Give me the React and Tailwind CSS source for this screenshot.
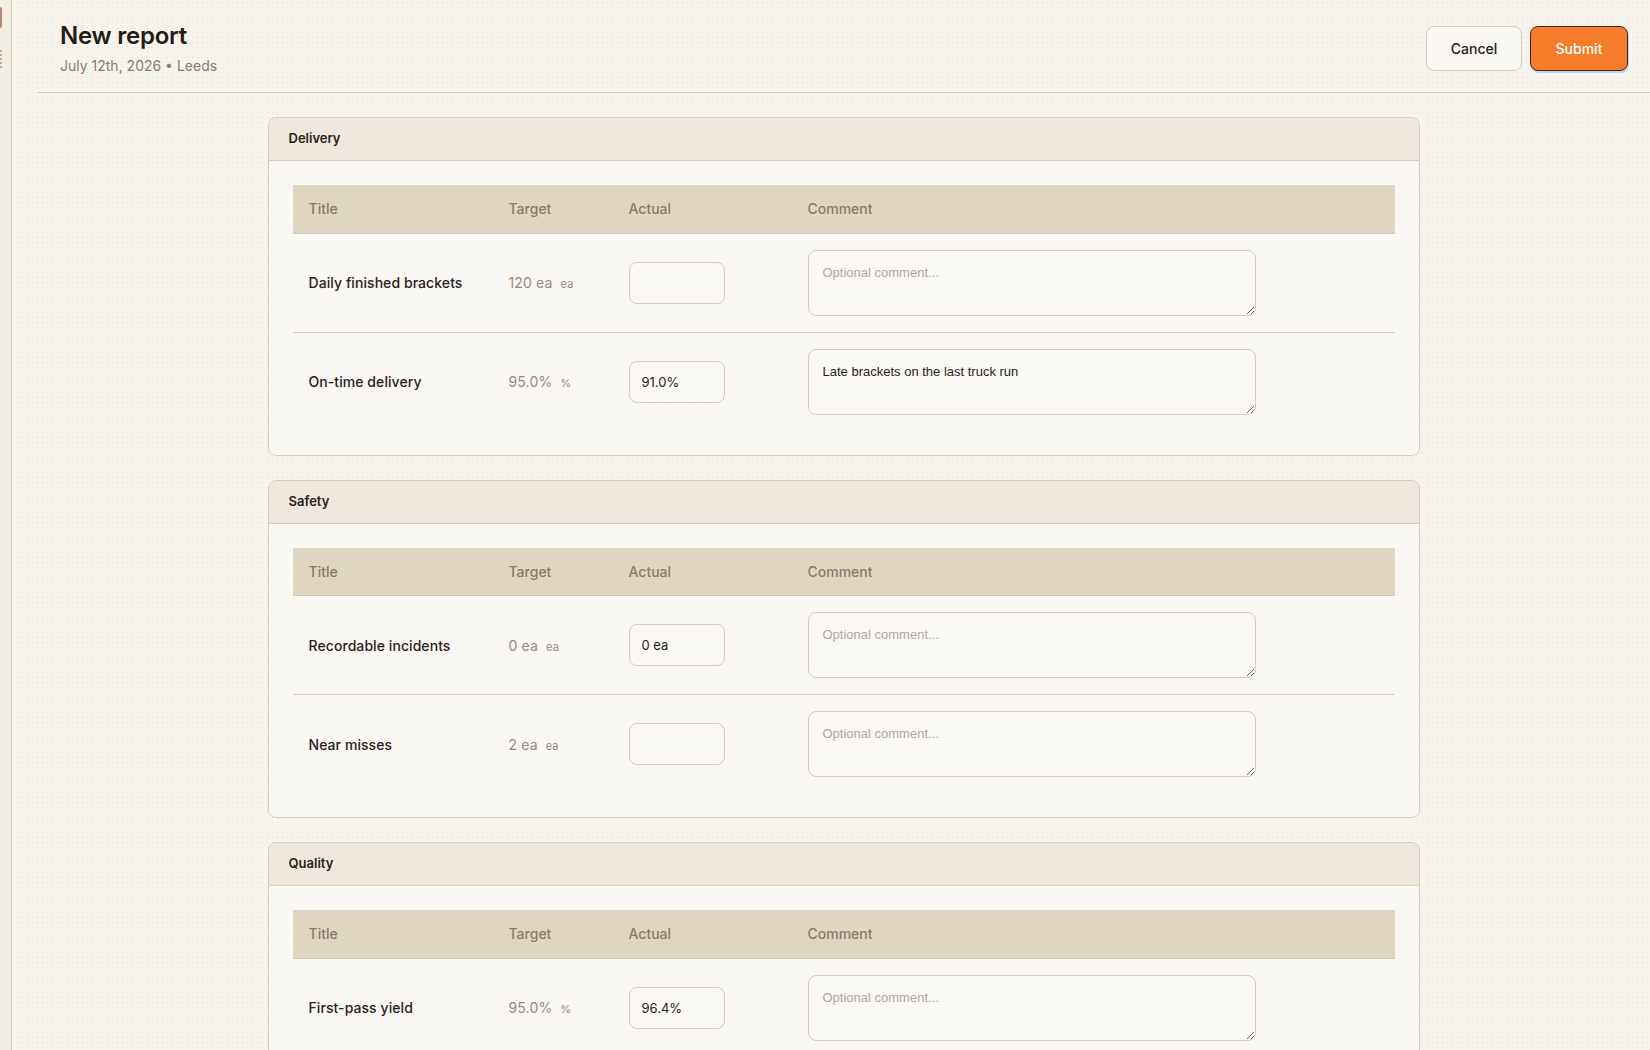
import React from "react";

const sections = [
  {
    name: "Delivery",
    rows: [
      { title: "Daily finished brackets", target: "120 ea", unit: "ea", actual: "", comment: "" },
      { title: "On-time delivery", target: "95.0%", unit: "%", actual: "91.0%", comment: "Late brackets on the last truck run" },
    ],
  },
  {
    name: "Safety",
    rows: [
      { title: "Recordable incidents", target: "0 ea", unit: "ea", actual: "0 ea", comment: "" },
      { title: "Near misses", target: "2 ea", unit: "ea", actual: "", comment: "" },
    ],
  },
  {
    name: "Quality",
    rows: [
      { title: "First-pass yield", target: "95.0%", unit: "%", actual: "96.4%", comment: "" },
    ],
  },
];

function Section({ section }) {
  return (
    <section className="overflow-hidden rounded-lg border border-[#d6cdbc]">
      <div className="flex h-[43px] items-center border-b border-[#d6cdbc] bg-[#ede6da]/90 px-5 text-[13px] font-semibold text-[#2a211c]">
        {section.name}
      </div>
      <div className="bg-[#faf8f4]/90 p-6">
        <table className="w-full table-fixed border-collapse text-left">
          <colgroup>
            <col className="w-[200px]" />
            <col className="w-[120px]" />
            <col className="w-[179px]" />
            <col />
          </colgroup>
          <thead>
            <tr className="h-[48px] border-b border-[#d3c9b5] bg-[#dfd6c2]">
              <th className="px-4 text-[14px] font-medium text-[#8a786e]">Title</th>
              <th className="px-4 text-[14px] font-medium text-[#8a786e]">Target</th>
              <th className="px-4 text-[14px] font-medium text-[#8a786e]">Actual</th>
              <th className="px-4 text-[14px] font-medium text-[#8a786e]">Comment</th>
            </tr>
          </thead>
          <tbody>
            {section.rows.map((r, i) => (
              <tr
                key={r.title}
                className={
                  i < section.rows.length - 1
                    ? "border-b border-[#d6cdbc]"
                    : ""
                }
              >
                <td className="px-4 py-4 align-middle text-[14px] font-medium tracking-[0.005em] text-[#2a211c]">
                  {r.title}
                </td>
                <td className="px-4 py-4 align-middle text-[14px] tracking-[0.01em] text-[#9a8880]">
                  {r.target}
                  <span className="ml-2 text-[11px] text-[#9a8880]">{r.unit}</span>
                </td>
                <td className="px-4 py-4 align-middle">
                  <input
                    type="text"
                    defaultValue={r.actual}
                    className="block h-[42px] w-24 rounded-lg border border-[#d6cdbc] bg-[#faf9f5] px-3 text-[13px] text-[#2a211c] outline-none"
                  />
                </td>
                <td className="px-4 py-4 align-middle">
                  <textarea
                    defaultValue={r.comment}
                    placeholder="Optional comment..."
                    className="block h-[66px] w-full max-w-md rounded-lg border border-[#d6cdbc] bg-[#faf9f5] px-3.5 py-3 font-['Liberation_Sans',Arial,sans-serif] text-[13px] leading-5 text-[#2a211c] outline-none placeholder:text-[#b3a59e]"
                  />
                </td>
              </tr>
            ))}
          </tbody>
        </table>
      </div>
    </section>
  );
}

export default function App() {
  return (
    <div className="flex h-screen overflow-hidden bg-[#f7f4ed] bg-[radial-gradient(circle,#e9e2d4_0.7px,transparent_0.9px)] bg-[length:5px_5px] font-['Inter',sans-serif] text-[#2a211c]">
      <aside className="relative w-3 shrink-0 border-r border-[#d6cdbc] bg-[#f2ede3]">
        <div className="mt-[7px] h-[21px] w-[2px] rounded-r bg-[#b8877a]" />
        <div className="mt-[22px] flex w-[2px] flex-col gap-[2px]">
          <div className="h-[2px] w-[2px] bg-[#c4a89c]" />
          <div className="h-[2px] w-[2px] bg-[#c4a89c]" />
          <div className="h-[2px] w-[2px] bg-[#c4a89c]" />
          <div className="h-[2px] w-[2px] bg-[#c4a89c]" />
          <div className="h-[2px] w-[2px] bg-[#c4a89c]" />
        </div>
      </aside>
      <main className="ml-[25px] min-w-0 flex-1 overflow-hidden">
        <header className="flex items-center justify-between border-b border-[#d6cdbc] pb-4 pl-[23px] pr-[22px] pt-5">
          <div className="flex flex-col gap-1">
            <h1 className="text-[24px] font-semibold leading-8 tracking-[-0.01em] text-[#241c17]">
              New report
            </h1>
            <p className="text-[14px] leading-5 text-[#8a7a72]">July 12th, 2026 • Leeds</p>
          </div>
          <div className="flex items-center gap-2">
            <button className="h-[45px] w-[96px] rounded-lg border border-[#d6cdbc] bg-[#faf8f3] text-[14px] font-medium text-[#2a211c]">
              Cancel
            </button>
            <button className="h-[45px] w-[98px] rounded-lg border border-[#3a2b22] bg-[#f57c2b] text-[14px] font-medium text-white shadow-[1px_2px_0_#c4d2ea]">
              Submit
            </button>
          </div>
        </header>
        <div className="pb-10 pt-6">
          <div className="mx-auto flex max-w-6xl flex-col gap-6">
            {sections.map((s) => (
              <Section key={s.name} section={s} />
            ))}
          </div>
        </div>
      </main>
    </div>
  );
}
